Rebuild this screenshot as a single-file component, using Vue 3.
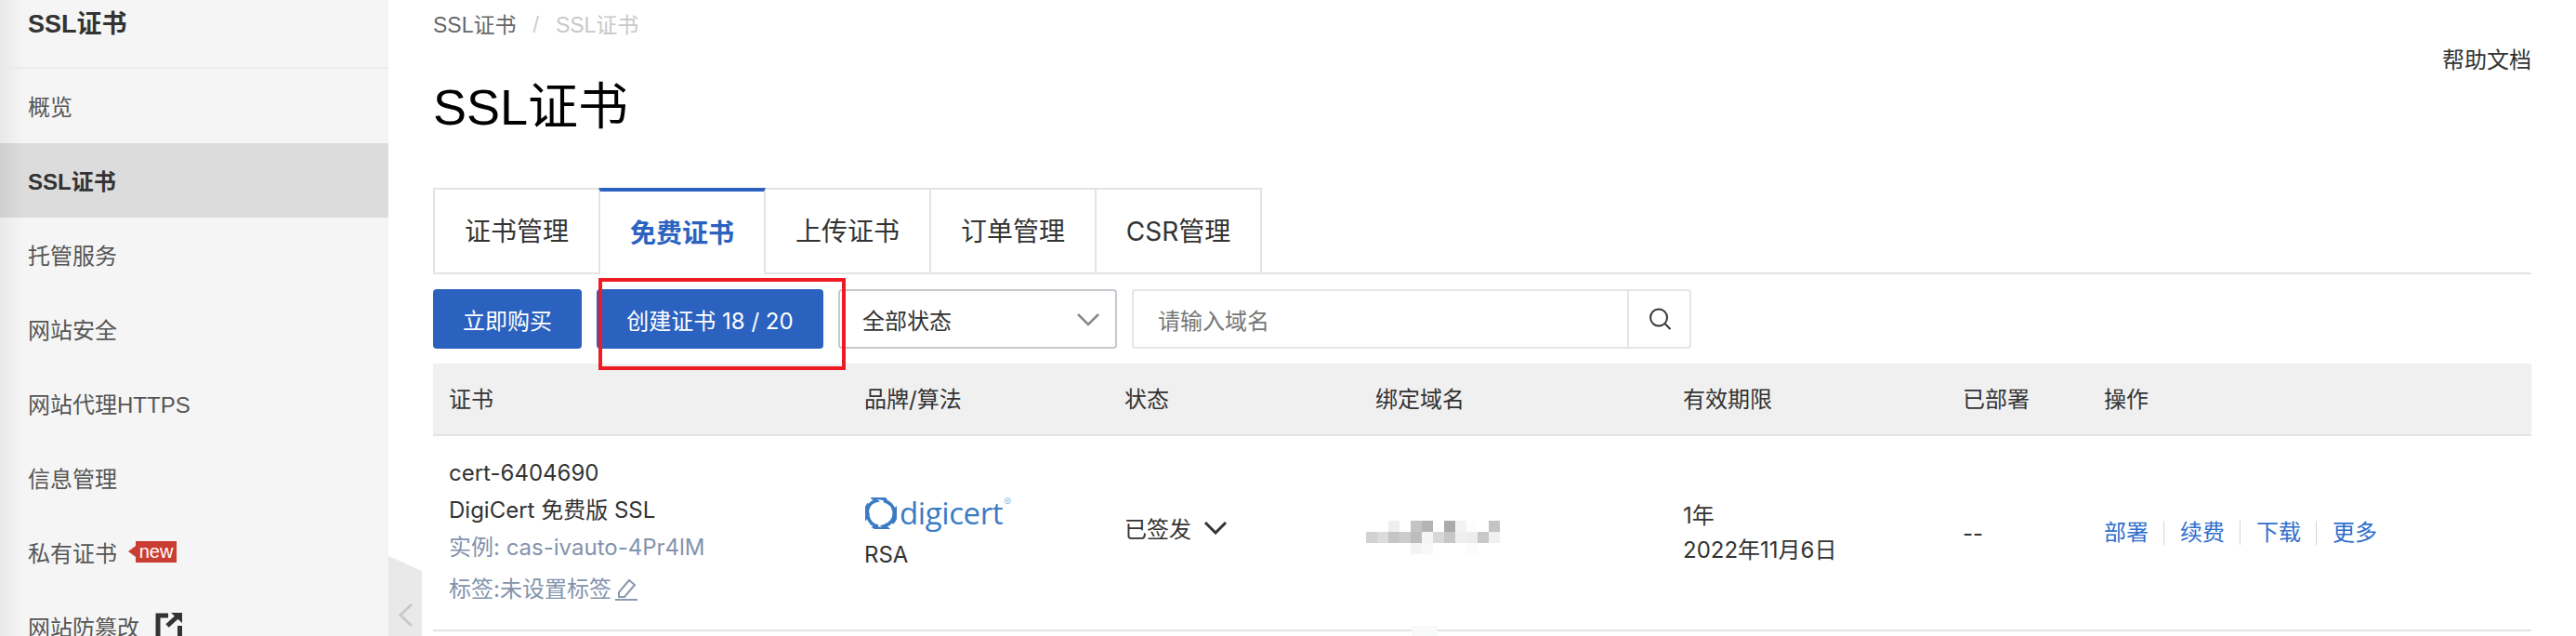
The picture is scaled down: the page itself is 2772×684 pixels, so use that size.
<template>
  <div class="console">
    <aside class="sidebar">
      <div class="side-title">SSL证书</div>
      <div
        v-for="item in menu"
        :key="item.label"
        class="side-item"
        :class="{ active: item.active }"
      >
        <span>{{ item.label }}</span>
        <span v-if="item.badge" class="new-badge">new</span>
        <svg v-if="item.external" class="ext-icon" width="30" height="30" viewBox="0 0 30 30">
          <path d="M3 30V4h11" fill="none" stroke="#333" stroke-width="5" />
          <path d="M13 15L24 5" fill="none" stroke="#333" stroke-width="5" />
          <path d="M17 1h12v11z" fill="#333" />
          <path d="M26.500 15v15" fill="none" stroke="#333" stroke-width="5" />
        </svg>
      </div>
    </aside>

    <div class="collapse-tab">
      <svg width="15" height="25" viewBox="0 0 15 25">
        <path d="M14 1L2 12.500L14 24" fill="none" stroke="#c9c9c9" stroke-width="3" />
      </svg>
    </div>

    <main class="main">
      <div class="crumbs">
        <span>SSL证书</span>
        <span class="crumb-sep">/</span>
        <span class="crumb-last">SSL证书</span>
      </div>
      <div class="page-head">
        <h1>SSL证书</h1>
        <a class="help">帮助文档</a>
      </div>

      <div class="tabs">
        <div v-for="tab in tabs" :key="tab" class="tab" :class="{ current: tab === '免费证书' }">
          {{ tab }}
        </div>
      </div>

      <div class="toolbar">
        <button class="btn buy">立即购买</button>
        <button class="btn create">创建证书 18 / 20</button>
        <div class="select">
          <span>全部状态</span>
          <svg width="26" height="15" viewBox="0 0 26 15">
            <path d="M2 2l11 11L24 2" fill="none" stroke="#888" stroke-width="2.500" />
          </svg>
        </div>
        <div class="search">
          <span class="placeholder">请输入域名</span>
          <span class="search-btn">
            <svg width="26" height="26" viewBox="0 0 26 26">
              <circle cx="12" cy="11.500" r="9" fill="none" stroke="#333" stroke-width="2" />
              <path d="M18.500 18l6 6" fill="none" stroke="#333" stroke-width="2" />
            </svg>
          </span>
        </div>
        <div class="red-mark"></div>
      </div>

      <div class="table">
        <div class="row head">
          <div v-for="col in columns" :key="col">{{ col }}</div>
        </div>
        <div class="row body">
          <div class="cert">
            <div>cert-6404690</div>
            <div>DigiCert 免费版 SSL</div>
            <div class="muted">实例: cas-ivauto-4Pr4lM</div>
            <div class="muted tag-line">
              标签:未设置标签
              <svg width="26" height="24" viewBox="0 0 26 24">
                <path d="M5 15L16 2l6 5-11 13H5z" fill="none" stroke="#8a98b0" stroke-width="2" />
                <path d="M1 23h24" stroke="#8a98b0" stroke-width="2" />
              </svg>
            </div>
          </div>
          <div class="brand">
            <div class="logo">
              <svg width="34" height="34" viewBox="0 0 34 34">
                <path d="M3 19C1 12 5 5 12 3.500L9 1c5-1.500 11 0 14 2" fill="none" stroke="#3a7bc4" stroke-width="3.500" />
                <path d="M20 3.500c6 1.500 10 5 11 11l2-2c1 6-1 12-4 15" fill="none" stroke="#3a7bc4" stroke-width="3.500" />
                <path d="M31 16c1 7-4 13-11 15l3 2c-5 1.500-12 0-15-2" fill="none" stroke="#3a7bc4" stroke-width="3.500" />
                <path d="M14 31C8 30 4 26 3 20l-2 2C0 16 1 10 4 7" fill="none" stroke="#3a7bc4" stroke-width="3.500" />
              </svg>
              <span class="logo-text">digicert</span>
              <span class="logo-mark">®</span>
            </div>
            <div>RSA</div>
          </div>
          <div class="status">
            已签发
            <svg width="26" height="15" viewBox="0 0 26 15">
              <path d="M2 2l11 11L24 2" fill="none" stroke="#333" stroke-width="3" />
            </svg>
          </div>
          <div class="mosaic">
            <span v-for="(shade, i) in mosaic" :key="i" :style="{ background: shade }"></span>
          </div>
          <div class="validity">
            <div>1年</div>
            <div>2022年11月6日</div>
          </div>
          <div>--</div>
          <div class="actions">
            <a v-for="act in actions" :key="act">{{ act }}</a>
          </div>
        </div>
        <div class="line-patch"></div>
      </div>
    </main>
  </div>
</template>

<script setup>
const menu = [
  { label: '概览' },
  { label: 'SSL证书', active: true },
  { label: '托管服务' },
  { label: '网站安全' },
  { label: '网站代理HTTPS' },
  { label: '信息管理' },
  { label: '私有证书', badge: true },
  { label: '网站防篡改', external: true },
]

const tabs = ['证书管理', '免费证书', '上传证书', '订单管理', 'CSR管理']
const columns = ['证书', '品牌/算法', '状态', '绑定域名', '有效期限', '已部署', '操作']
const actions = ['部署', '续费', '下载', '更多']

const mosaic = [
  '#fff', '#fff', '#efefef', '#fff', '#c4c4c4', '#b4b4b4', '#fff', '#ababab', '#f3f3f3', '#fdfdfd', '#fff', '#c4c4c4',
  '#d2d2d2', '#dcdcdc', '#c4c4c4', '#cccccc', '#bdbdbd', '#f5f5f5', '#d8d8d8', '#c6c6c6', '#efefef', '#ededed', '#c8c8c8', '#f0f0f0',
  '#fff', '#fff', '#fff', '#fff', '#f3f3f3', '#f8f8f8', '#fff', '#fff', '#fff', '#fbfbfb', '#fff', '#fff',
]
</script>

<style>
html, body {
  margin: 0;
  background: #fff;
}
</style>

<style scoped>
.console {
  position: relative;
  display: flex;
  width: 2772px;
  height: 684px;
  overflow: hidden;
  font-family: Inter, "Noto Sans CJK SC", sans-serif;
  font-size: 24px;
  color: #333;
}
.sidebar {
  flex: none;
  width: 418px;
  background: linear-gradient(90deg, #e9e9e9, #f5f5f5 26px);
  font-family: "Liberation Sans", "Noto Sans CJK SC", sans-serif;
}
.side-title {
  height: 72px;
  padding-left: 30px;
  line-height: 52px;
  font-size: 27px;
  font-weight: 700;
  border-bottom: 2px solid #ececec;
}
.side-item {
  display: flex;
  align-items: center;
  height: 80px;
  padding-left: 30px;
  padding-bottom: 1px;
  box-sizing: border-box;
  color: #555;
}
.side-item.active {
  background: linear-gradient(90deg, #cfcfcf, #dcdcdc 26px);
  color: #333;
  font-weight: 700;
}
.new-badge {
  position: relative;
  margin-left: 20px;
  width: 44px;
  height: 23px;
  line-height: 22px;
  text-align: center;
  font-size: 20px;
  color: #fff;
  background: #c93d32;
}
.new-badge::before {
  content: "";
  position: absolute;
  left: -8px;
  top: 5px;
  border: 6px solid transparent;
  border-left: 0;
  border-right: 8px solid #c93d32;
}
.ext-icon {
  margin-left: 17px;
  margin-top: -2px;
}
.collapse-tab {
  position: absolute;
  left: 418px;
  top: 598px;
  width: 36px;
  height: 86px;
  box-sizing: border-box;
  padding: 51px 0 0 11px;
  background: #e9e9e9;
  clip-path: polygon(0 0, 100% 16px, 100% 100%, 0 100%);
}
.main {
  flex: 1;
  min-width: 0;
  padding: 0 48px;
}
.crumbs {
  height: 54px;
  line-height: 55px;
  font-family: "Liberation Sans", "Noto Sans CJK SC", sans-serif;
  font-size: 23px;
  color: #666;
}
.crumb-sep {
  margin: 0 18px;
  color: #ccc;
}
.crumb-last {
  color: #c8c8c8;
}
.page-head {
  display: flex;
  justify-content: space-between;
  height: 148px;
  font-family: "Liberation Sans", "Noto Sans CJK SC", sans-serif;
}
h1 {
  margin: 31px 0 0;
  font-size: 54px;
  font-weight: 400;
  line-height: 60px;
  color: #000;
}
.help {
  line-height: 22px;
  color: #333;
}
.tabs {
  display: flex;
  border-bottom: 2px solid #e3e3e3;
}
.tab {
  width: 180px;
  height: 91px;
  box-sizing: border-box;
  margin-left: -2px;
  border: 2px solid #e3e3e3;
  border-bottom: 0;
  text-align: center;
  line-height: 90px;
  font-size: 28px;
}
.tab:first-child {
  margin-left: 0;
}
.tab.current {
  position: relative;
  height: 93px;
  margin-bottom: -2px;
  border-top: 4px solid #2b62c0;
  background: #fff;
  color: #2b62c0;
  font-weight: 700;
}
.toolbar {
  position: relative;
  z-index: 1;
  display: flex;
  gap: 16px;
  margin-top: 16px;
  height: 64px;
}
.btn {
  height: 64px;
  padding: 0;
  border: 0;
  border-radius: 4px;
  background: #2b62c0;
  color: #fff;
  font: inherit;
}
.buy {
  width: 160px;
}
.create {
  width: 244px;
}
.select {
  display: flex;
  align-items: center;
  justify-content: space-between;
  width: 300px;
  padding: 0 16px 0 24px;
  box-sizing: border-box;
  border: 2px solid #c5c9ce;
  border-radius: 4px;
}
.search {
  display: flex;
  align-items: center;
  justify-content: space-between;
  width: 602px;
  box-sizing: border-box;
  border: 2px solid #e3e5e8;
  border-radius: 4px;
}
.placeholder {
  padding-left: 26px;
  color: #777;
}
.search-btn {
  display: flex;
  align-items: center;
  justify-content: center;
  width: 65px;
  height: 100%;
  border-left: 2px solid #e3e5e8;
}
.red-mark {
  position: absolute;
  left: 178px;
  top: -12px;
  width: 266px;
  height: 99px;
  box-sizing: border-box;
  border: 4px solid #ed1c24;
}
.table {
  position: relative;
  margin-top: 16px;
}
.row {
  display: grid;
  grid-template-columns: 447px 280px 270px 331px 301px 152px 1fr;
  align-items: center;
}
.row > div {
  padding-left: 17px;
}
.head {
  height: 78px;
  box-sizing: border-box;
  padding-bottom: 4px;
  background: #f0f0f0;
  border-bottom: 2px solid #e3e3e3;
}
.body {
  height: 210px;
  box-sizing: border-box;
  border-bottom: 2px solid #e3e3e3;
}
.cert {
  margin-top: -3px;
  line-height: 40px;
}
.muted {
  color: #8393ad;
}
.tag-line {
  display: flex;
  align-items: center;
  gap: 3px;
  margin-top: 5px;
  height: 40px;
}
.brand {
  margin-top: -2px;
}
.logo {
  display: flex;
  align-items: center;
  height: 36px;
  margin-bottom: 12px;
  margin-left: 1px;
  color: #3a7bc4;
}
.logo-text {
  margin-left: 3px;
  font-family: "Open Sans", sans-serif;
  font-size: 33px;
  letter-spacing: -0.4px;
  line-height: 36px;
}
.logo-mark {
  align-self: flex-start;
  margin: -2px 0 0 1px;
  font-size: 12px;
  color: #9cbde0;
}
.status {
  display: flex;
  align-items: center;
  gap: 13px;
  margin-top: -12px;
}
.row > .mosaic {
  display: grid;
  grid-template-columns: repeat(12, 12px);
  grid-auto-rows: 12px;
  margin: 10px 0 0 7px;
  padding: 0;
}
.validity {
  line-height: 37px;
}
.actions {
  display: flex;
}
.actions a {
  width: 48px;
  color: #2f6fcc;
  line-height: 26px;
  white-space: nowrap;
}
.actions a:not(:last-child) {
  padding-right: 16px;
  margin-right: 17px;
  border-right: 1px solid #d5d5d5;
}
.line-patch {
  position: absolute;
  left: 1053px;
  bottom: -6px;
  width: 28px;
  height: 12px;
  background: #f8faf9;
}
</style>
